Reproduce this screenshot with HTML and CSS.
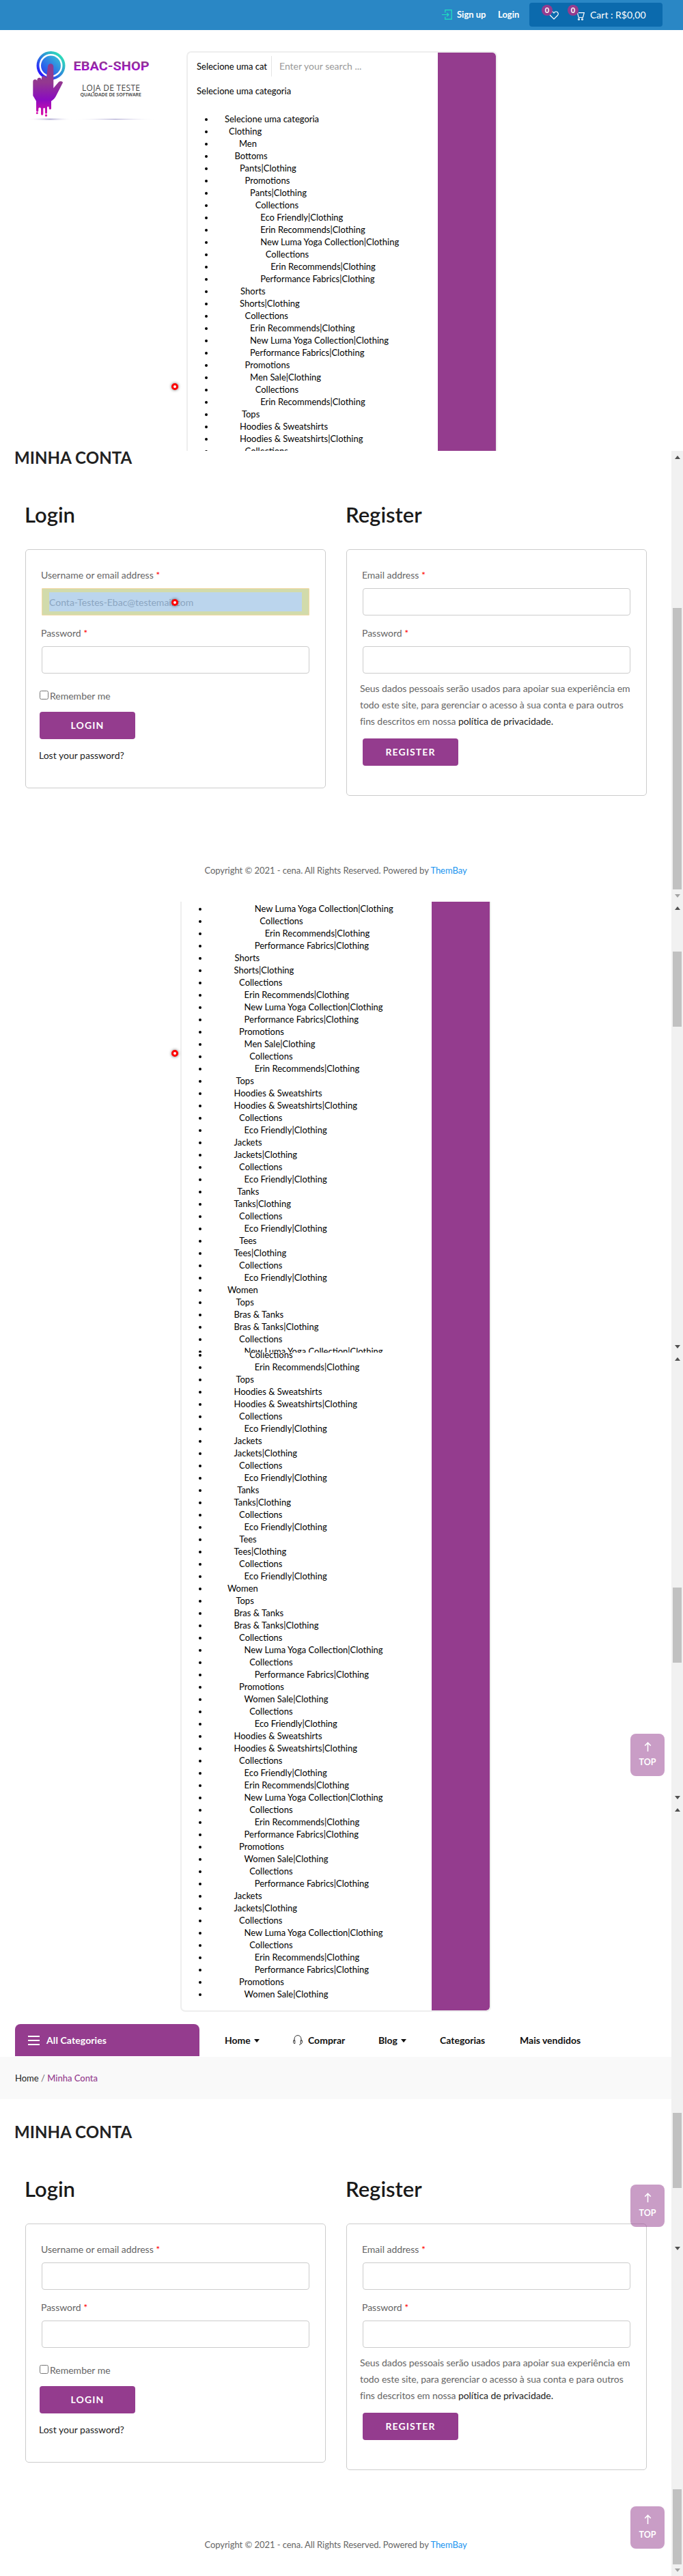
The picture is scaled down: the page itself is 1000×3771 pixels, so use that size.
FILE: index.html
```html
<!DOCTYPE html>
<html lang="pt-BR">
<head>
<meta charset="utf-8">
<title>EBAC-SHOP - Minha Conta</title>
<link rel="stylesheet" href="styles.css">
</head>
<body>
<section class="view view-top">
  <header class="topbar">
    <svg class="signin-icon" width="15" height="15" viewBox="0 0 15 15" fill="none" stroke="#1ee3bf" stroke-width="1.2"><path d="M4.8 4.5V.7h9.4v13.4H4.8v-3.5M0 7.5h9.8M7.2 4.8l2.7 2.7-2.7 2.7"/></svg>
    <a class="signup">Sign up</a>
    <a class="signin">Login</a>
    <div class="cartbox">
      <span class="wish"><svg width="14" height="13" viewBox="0 0 14 13" fill="none" stroke="#fff" stroke-width="1.2"><path d="M7 11.9 1.6 6.5C-.4 4.2 1.2 1 3.8 1 5.3 1 6.4 1.9 7 3 7.6 1.9 8.700 1 10.200 1c2.600 0 4.200 3.200 2.200 5.500z"/></svg><b class="count">0</b></span>
      <span class="cart"><svg width="13" height="13" viewBox="0 0 13 13" fill="none" stroke="#fff" stroke-width="1.200"><path d="M0 1.200h2.200l2 7.300h6.300L12.300 1.600H4"/><circle cx="4.500" cy="11.200" r="1"/><circle cx="9.500" cy="11.200" r="1"/></svg><b class="count">0</b></span>
      <span class="total">Cart : R$0,00</span>
    </div>
  </header>
  <div class="masthead">
    <svg class="logo" width="190" height="104" viewBox="40 74 190 104">
      <defs>
        <linearGradient id="ring" x1="0" y1="1" x2="1" y2="0"><stop offset="0.1" stop-color="#2a10ff"/><stop offset="0.5" stop-color="#2d86dc"/><stop offset="0.9" stop-color="#2fe0b8"/></linearGradient>
        <linearGradient id="disc" x1="0" y1="1" x2="1" y2="0"><stop offset="0" stop-color="#2638f5"/><stop offset="1" stop-color="#37c6d4"/></linearGradient>
        <linearGradient id="hand" gradientUnits="userSpaceOnUse" x1="0" y1="94" x2="0" y2="170"><stop offset="0" stop-color="#8c3c92"/><stop offset="0.35" stop-color="#93388f"/><stop offset="0.68" stop-color="#8a0cc0"/><stop offset="1" stop-color="#e010a8"/></linearGradient>
        <linearGradient id="brand" gradientUnits="userSpaceOnUse" x1="0" y1="90" x2="0" y2="104"><stop offset="0" stop-color="#8f3a8c"/><stop offset="1" stop-color="#a008d0"/></linearGradient>
        <radialGradient id="shade"><stop offset="0" stop-color="#a9a3cf"/><stop offset="1" stop-color="#fff" stop-opacity="0"/></radialGradient>
      </defs>
      <circle cx="74.500" cy="96" r="19" fill="none" stroke="url(#ring)" stroke-width="4"/>
      <circle cx="74.500" cy="96" r="14.500" fill="url(#disc)"/>
      <path fill="url(#hand)" d="M70 97.500a4.100 4.100 0 0 1 8.300 0V129l7.200-8.500c2.500-2.700 6.500-1.600 6.500.5L82 140.500c-1.500 3.500-4 5.500-7 7.500v11a1.700 1.700 0 0 1-3.300 0v-2a1.400 1.400 0 0 0-2.700 0v8a1.500 1.500 0 0 1-3 0v-6a1.400 1.400 0 0 0-2.700 0v8a1.600 1.600 0 0 1-3.300 0v-8a1.900 1.900 0 0 0-3.700 0v3a1.600 1.600 0 0 1-3.300 0V148l-4.700-8V119.500c0-4 5.300-4 6-1v-1.500c.5-4.500 6-4.500 6.500 0v-2.500c.5-4.500 6-4 7 0z"/>
      <circle cx="54.300" cy="165.500" r="1.500" fill="#d512ae"/>
      <circle cx="67.500" cy="169" r="1.700" fill="#dd12aa"/>
      <text x="107.500" y="103" class="logo-name" textLength="111" lengthAdjust="spacingAndGlyphs" fill="url(#brand)">EBAC-SHOP</text>
      <text x="120" y="133.300" class="logo-sub" textLength="85">LOJA DE TESTE</text>
      <text x="117.500" y="141" class="logo-tag" textLength="89.500">QUALIDADE DE SOFTWARE</text>
      <ellipse cx="73" cy="174.500" rx="33" ry="2.500" fill="url(#shade)"/>
      <ellipse cx="169" cy="174.500" rx="60" ry="1.500" fill="url(#shade)"/>
    </svg>
    <div class="search">
      <div class="search-main">
        <div class="search-row"><span class="select">Selecione uma cat</span><span class="query">Enter your search ...</span></div>
        <p class="current">Selecione uma categoria</p>
        <ul class="cats">
          <li class="root">Selecione uma categoria</li>
          <li class="l1">Clothing</li>
          <li class="men">Men</li>
          <li class="bottoms">Bottoms</li>
          <li class="l3">Pants|Clothing</li>
          <li class="l4">Promotions</li>
          <li class="l5">Pants|Clothing</li>
          <li class="l6">Collections</li>
          <li class="l7">Eco Friendly|Clothing</li>
          <li class="l7">Erin Recommends|Clothing</li>
          <li class="l7">New Luma Yoga Collection|Clothing</li>
          <li class="l8">Collections</li>
          <li class="l9">Erin Recommends|Clothing</li>
          <li class="l7">Performance Fabrics|Clothing</li>
          <li class="shorts">Shorts</li>
          <li class="l3">Shorts|Clothing</li>
          <li class="l4">Collections</li>
          <li class="l5">Erin Recommends|Clothing</li>
          <li class="l5">New Luma Yoga Collection|Clothing</li>
          <li class="l5">Performance Fabrics|Clothing</li>
          <li class="l4">Promotions</li>
          <li class="l5">Men Sale|Clothing</li>
          <li class="l6">Collections</li>
          <li class="l7">Erin Recommends|Clothing</li>
          <li class="tops">Tops</li>
          <li class="l3">Hoodies &amp; Sweatshirts</li>
          <li class="l3">Hoodies &amp; Sweatshirts|Clothing</li>
          <li class="l4">Collections</li>
        </ul>
      </div>
      <div class="search-btn"></div>
    </div>
  </div>
  <i class="pointer pointer-list"></i>
</section>

<section class="view view-account">
  <div class="page">
    <h1>MINHA CONTA</h1>
    <div class="account">
      <div class="col">
        <h2>Login</h2>
        <form class="panel panel-login">
          <label>Username or email address <em>*</em></label>
          <div class="input inspected"><span>Conta-Testes-Ebac@testemail.com</span></div>
          <label>Password <em>*</em></label>
          <div class="input"></div>
          <div class="remember"><i class="check"></i>Remember me</div>
          <div class="btn">LOGIN</div>
          <a class="lost">Lost your password?</a>
        </form>
      </div>
      <div class="col">
        <h2>Register</h2>
        <form class="panel panel-register">
          <label>Email address <em>*</em></label>
          <div class="input"></div>
          <label>Password <em>*</em></label>
          <div class="input"></div>
          <p class="privacy">Seus dados pessoais serão usados para apoiar sua experiência em<br>todo este site, para gerenciar o acesso à sua conta e para outros<br>fins descritos em nossa <a>política de privacidade.</a></p>
          <div class="btn">REGISTER</div>
        </form>
      </div>
    </div>
    <footer>Copyright © 2021 - cena. All Rights Reserved. Powered by <a>ThemBay</a></footer>
  </div>
  <div class="bar"><div class="track"><i class="up"></i><i class="thumb" style="height:412px;margin-top:218px"></i><i class="down off"></i></div></div>
  <i class="pointer pointer-input"></i>
</section>

<section class="view view-list">
  <div class="page">
    <div class="search narrow">
      <div class="search-main">
        <ul class="cats">
          <li class="l7">New Luma Yoga Collection|Clothing</li>
          <li class="l8">Collections</li>
          <li class="l9">Erin Recommends|Clothing</li>
          <li class="l7">Performance Fabrics|Clothing</li>
          <li class="shorts">Shorts</li>
          <li class="l3">Shorts|Clothing</li>
          <li class="l4">Collections</li>
          <li class="l5">Erin Recommends|Clothing</li>
          <li class="l5">New Luma Yoga Collection|Clothing</li>
          <li class="l5">Performance Fabrics|Clothing</li>
          <li class="l4">Promotions</li>
          <li class="l5">Men Sale|Clothing</li>
          <li class="l6">Collections</li>
          <li class="l7">Erin Recommends|Clothing</li>
          <li class="tops">Tops</li>
          <li class="l3">Hoodies &amp; Sweatshirts</li>
          <li class="l3">Hoodies &amp; Sweatshirts|Clothing</li>
          <li class="l4">Collections</li>
          <li class="l5">Eco Friendly|Clothing</li>
          <li class="l3">Jackets</li>
          <li class="l3">Jackets|Clothing</li>
          <li class="l4">Collections</li>
          <li class="l5">Eco Friendly|Clothing</li>
          <li class="tanks">Tanks</li>
          <li class="l3">Tanks|Clothing</li>
          <li class="l4">Collections</li>
          <li class="l5">Eco Friendly|Clothing</li>
          <li class="tees">Tees</li>
          <li class="l3">Tees|Clothing</li>
          <li class="l4">Collections</li>
          <li class="l5">Eco Friendly|Clothing</li>
          <li class="women">Women</li>
          <li class="tops">Tops</li>
          <li class="l3">Bras &amp; Tanks</li>
          <li class="l3">Bras &amp; Tanks|Clothing</li>
          <li class="l4">Collections</li>
          <li class="l5">New Luma Yoga Collection|Clothing</li>
        </ul>
      </div>
      <div class="search-btn"></div>
    </div>
  </div>
  <div class="bar"><div class="track"><i class="up"></i><i class="thumb" style="height:110px;margin-top:61px"></i><i class="down"></i></div></div>
  <i class="pointer pointer-list"></i>
</section>

<section class="view view-rest">
  <div class="page">
    <div class="search narrow last">
      <div class="search-main">
        <ul class="cats">
          <li class="l6">Collections</li>
          <li class="l7">Erin Recommends|Clothing</li>
          <li class="tops">Tops</li>
          <li class="l3">Hoodies &amp; Sweatshirts</li>
          <li class="l3">Hoodies &amp; Sweatshirts|Clothing</li>
          <li class="l4">Collections</li>
          <li class="l5">Eco Friendly|Clothing</li>
          <li class="l3">Jackets</li>
          <li class="l3">Jackets|Clothing</li>
          <li class="l4">Collections</li>
          <li class="l5">Eco Friendly|Clothing</li>
          <li class="tanks">Tanks</li>
          <li class="l3">Tanks|Clothing</li>
          <li class="l4">Collections</li>
          <li class="l5">Eco Friendly|Clothing</li>
          <li class="tees">Tees</li>
          <li class="l3">Tees|Clothing</li>
          <li class="l4">Collections</li>
          <li class="l5">Eco Friendly|Clothing</li>
          <li class="women">Women</li>
          <li class="tops">Tops</li>
          <li class="l3">Bras &amp; Tanks</li>
          <li class="l3">Bras &amp; Tanks|Clothing</li>
          <li class="l4">Collections</li>
          <li class="l5">New Luma Yoga Collection|Clothing</li>
          <li class="l6">Collections</li>
          <li class="l7">Performance Fabrics|Clothing</li>
          <li class="l4">Promotions</li>
          <li class="l5">Women Sale|Clothing</li>
          <li class="l6">Collections</li>
          <li class="l7">Eco Friendly|Clothing</li>
          <li class="l3">Hoodies &amp; Sweatshirts</li>
          <li class="l3">Hoodies &amp; Sweatshirts|Clothing</li>
          <li class="l4">Collections</li>
          <li class="l5">Eco Friendly|Clothing</li>
          <li class="l5">Erin Recommends|Clothing</li>
          <li class="l5">New Luma Yoga Collection|Clothing</li>
          <li class="l6">Collections</li>
          <li class="l7">Erin Recommends|Clothing</li>
          <li class="l5">Performance Fabrics|Clothing</li>
          <li class="l4">Promotions</li>
          <li class="l5">Women Sale|Clothing</li>
          <li class="l6">Collections</li>
          <li class="l7">Performance Fabrics|Clothing</li>
          <li class="l3">Jackets</li>
          <li class="l3">Jackets|Clothing</li>
          <li class="l4">Collections</li>
          <li class="l5">New Luma Yoga Collection|Clothing</li>
          <li class="l6">Collections</li>
          <li class="l7">Erin Recommends|Clothing</li>
          <li class="l7">Performance Fabrics|Clothing</li>
          <li class="l4">Promotions</li>
          <li class="l5">Women Sale|Clothing</li>
        </ul>
      </div>
      <div class="search-btn"></div>
    </div>
    <nav class="menu">
      <div class="all"><span class="burger"></span>All Categories</div>
      <a class="m-home">Home<i class="caret"></i></a>
      <a class="m-shop"><svg width="14" height="15" viewBox="0 0 14 15" fill="none" stroke="#333" stroke-width="1"><path d="M2 9V6c0-7.200 10-7.200 10 0v3M.8 7.800h2v4.700h-.8c-1 0-1.500-1-1.500-2.200zM13.200 7.800h-2v4.700h.8c1 0 1.500-1 1.500-2.200zM11.800 12.500c0 1.200-1 1.700-2.800 1.700"/></svg>Comprar</a>
      <a class="m-blog">Blog<i class="caret"></i></a>
      <a class="m-cats">Categorias</a>
      <a class="m-best">Mais vendidos</a>
    </nav>
    <div class="crumbs"><a>Home</a> / <b>Minha Conta</b></div>
    <h1>MINHA CONTA</h1>
    <div class="account">
      <div class="col">
        <h2>Login</h2>
        <form class="panel panel-login">
          <label>Username or email address <em>*</em></label>
          <div class="input"></div>
          <label>Password <em>*</em></label>
          <div class="input"></div>
          <div class="remember"><i class="check"></i>Remember me</div>
          <div class="btn">LOGIN</div>
          <a class="lost">Lost your password?</a>
        </form>
      </div>
      <div class="col">
        <h2>Register</h2>
        <form class="panel panel-register">
          <label>Email address <em>*</em></label>
          <div class="input"></div>
          <label>Password <em>*</em></label>
          <div class="input"></div>
          <p class="privacy">Seus dados pessoais serão usados para apoiar sua experiência em<br>todo este site, para gerenciar o acesso à sua conta e para outros<br>fins descritos em nossa <a>política de privacidade.</a></p>
          <div class="btn">REGISTER</div>
        </form>
      </div>
    </div>
    <footer>Copyright © 2021 - cena. All Rights Reserved. Powered by <a>ThemBay</a></footer>
  </div>
  <div class="bar">
    <div class="track"><i class="up"></i><i class="thumb" style="height:110px;margin-top:332px"></i><i class="down"></i></div>
    <div class="track"><i class="up"></i><i class="thumb" style="height:110px;margin-top:441px"></i><i class="down"></i></div>
    <div class="track tail"><i class="thumb" style="height:110px;margin-top:344px"></i><i class="down off"></i></div>
  </div>
  <a class="totop t1"><svg width="11" height="14" viewBox="0 0 11 14" fill="none" stroke="#fff" stroke-width="1.600"><path d="M5.500 14V1.500M1.200 5.500l4.300-4.300 4.300 4.300"/></svg>TOP</a>
  <a class="totop t2"><svg width="11" height="14" viewBox="0 0 11 14" fill="none" stroke="#fff" stroke-width="1.600"><path d="M5.500 14V1.500M1.200 5.500l4.300-4.300 4.300 4.300"/></svg>TOP</a>
  <a class="totop t3"><svg width="11" height="14" viewBox="0 0 11 14" fill="none" stroke="#fff" stroke-width="1.600"><path d="M5.500 14V1.500M1.200 5.500l4.300-4.300 4.300 4.300"/></svg>TOP</a>
</section>
</body>
</html>
```
FILE: styles.css
```css
* { box-sizing: border-box; }
body { margin: 0; width: 1000px; background: #fff; color: #666; font: 14px/20px Lato, "Liberation Sans", sans-serif; }
h1, h2, p, ul { margin: 0; padding: 0; }
svg { display: block; flex: none; }

.view { position: relative; display: flex; height: 660px; overflow: hidden; }
.view-top { flex-direction: column; }
.view-rest { height: 1791px; }
.page { width: 983px; flex: none; }

/* top bar */
.topbar { display: flex; height: 44px; flex: none; padding: 4px 30px 5px 647px; background: #2a87c5; color: #fff; font-weight: 700; font-size: 13px; line-height: 35px; white-space: nowrap; }
.signin-icon { margin-top: 10px; }
.signup { margin-left: 7px; width: 60px; }
.signin { width: 46px; }
.cartbox { display: flex; width: 195px; height: 35px; border-radius: 4px; background: #0b6aad; font-weight: 400; font-size: 14px; }
.wish, .cart { position: relative; height: 35px; }
.wish { margin-left: 29px; width: 39px; padding-top: 12px; }
.cart { width: 21px; padding-top: 13px; }
.count { position: absolute; top: 3px; width: 16px; height: 16px; border-radius: 50%; background: #943c8e; font-size: 11px; line-height: 16px; text-align: center; }
.wish .count { left: -11px; }
.cart .count { left: -12px; }
.total { line-height: 36px; }

/* logo and category search */
.masthead { display: flex; align-items: flex-start; padding: 31px 0 0 40px; }
.logo { width: 190px; margin: -1px 43px 0 0; }
.logo-name { font: 700 18px Roboto, "Liberation Sans", sans-serif; }
.logo-sub { font: 12px "Open Sans", sans-serif; fill: #444; }
.logo-tag { font: 600 7px "Open Sans", sans-serif; fill: #333; }
.search { display: flex; width: 455px; min-height: 700px; flex: none; border: 2px solid #eee; border-radius: 7px; overflow: hidden; color: #000; font-size: 13px; line-height: 18px; }
.search-main { flex: 1; padding: 5px 0 0 13px; white-space: nowrap; }
.search-btn { width: 85px; background: #943c8e; border-radius: 0 5px 5px 0; }
.search-row { display: flex; height: 30px; line-height: 30px; }
.select { width: 110px; border-right: 1px solid #e5e5e5; }
.query { margin-left: 11px; font-size: 14px; color: #999; }
.current { margin: 12px 0 23px; }
.cats { list-style: none; margin-left: 12px; }
.cats li { display: flex; gap: .8px; height: 18px; }
.cats li::before { content: ""; width: 4px; height: 4px; margin-top: 8px; border-radius: 50%; background: #000; }
.cats .root::before { margin-right: 24.2px; }
.cats .l1::before { margin-right: 30.3px; }
.cats .women::before { margin-right: 36.6px; }
.cats .bottoms::before { margin-right: 38.7px; }
.cats .men::before { margin-right: 45.2px; }
.cats .l3::before { margin-right: 46.2px; }
.cats .shorts::before { margin-right: 47.3px; }
.cats .tops::before { margin-right: 49.1px; }
.cats .tanks::before { margin-right: 50.9px; }
.cats .l4::before { margin-right: 53.8px; }
.cats .tees::before { margin-right: 54px; }
.cats .l5::before { margin-right: 61.3px; }
.cats .l6::before { margin-right: 68.9px; }
.cats .l7::before { margin-right: 76.4px; }
.cats .l8::before { margin-right: 84px; }
.cats .l9::before { margin-right: 91.5px; }
.narrow { margin-left: 264px; border-top: 0; border-radius: 0; }
.narrow .search-main { padding-top: 1px; }
.narrow .cats li { gap: 1.3px; }
.narrow .search-btn { border-radius: 0; }
.last { margin-top: -6px; min-height: 0; border-radius: 0 0 7px 7px; }
.last .search-main { padding: 0 0 15px 13px; }
.last .search-btn { border-radius: 0 0 5px 0; }

/* main menu */
.menu { display: flex; height: 47px; margin: 18px 0 1px 22px; color: #111; font-weight: 700; line-height: 46px; white-space: nowrap; }
.menu a { display: flex; align-items: center; }
.all { display: flex; align-items: center; width: 270px; padding-left: 19px; border-radius: 8px 8px 0 0; background: #943c8e; color: #fff; line-height: 47px; letter-spacing: .1px; }
.burger { width: 17px; height: 14px; margin-right: 10px; border: solid #fff; border-width: 2px 0; background: linear-gradient(#fff, #fff) 0 4px / 17px 2px no-repeat; }
.caret { margin: 1px 0 0 5px; border: 4px solid transparent; border-top: 5px solid #111; border-bottom: 0; }
.m-home { margin-left: 37px; width: 100px; }
.m-shop { width: 125px; }
.m-shop svg { margin: -1px 8px 0 0; }
.m-blog { width: 90px; }
.m-cats { width: 117px; }
.crumbs { height: 62px; padding-left: 22px; background: #f9f9f9; font-size: 13px; line-height: 62px; }
.crumbs a { color: #222; }
.crumbs b { color: #943c8e; font-weight: 500; }

/* account */
h1 { padding-left: 21px; color: #222; font-size: 24px; font-weight: 700; line-height: 19px; letter-spacing: .1px; }
.crumbs + h1 { margin-top: 38px; }
.account { display: flex; gap: 30px; align-items: flex-start; margin: 55px 0 0 37px; height: 431px; }
.col { width: 440px; }
h2 { margin-left: -1px; color: #1a1a1a; font-size: 31px; font-weight: 600; line-height: 38px; }
.panel { margin: 32px 0 0; padding: 27px 20px 0; border: 1px solid #ccc; border-radius: 5px; }
.panel-login { height: 350px; }
.panel-register { height: 361px; }
label { display: block; margin-left: 2px; height: 29px; letter-spacing: -.02px; }
em { color: #f00; font-style: normal; }
.input { height: 40px; margin: 0 3px 16px; border: 1px solid #ccc; border-radius: 4px; }
.inspected { padding: 5px 10px; border-color: #f3d9a4; border-radius: 1px; background: #d2dbab; color: #8ba5c1; }
.inspected span { display: block; height: 28px; line-height: 30px; background: #bbd5ed; }
.remember { display: flex; margin-top: 23px; }
.check { width: 13px; height: 13px; margin: 2px 2px 0 0; border: 1px solid #767676; border-radius: 2.5px; }
.btn { width: 140px; height: 40px; margin-top: 13px; border-radius: 4px; background: #943c8e; color: #fff; font-weight: 700; line-height: 40px; letter-spacing: 1.1px; text-align: center; }
.panel-register .btn { margin-left: 3px; }
.lost { display: block; margin-top: 14px; margin-left: -1px; color: #222; }
.privacy { margin: -6px 0 0 -1px; line-height: 24px; letter-spacing: -.07px; white-space: nowrap; }
.privacy a { color: #222; }
footer { margin-top: 99px; font-size: 13px; text-align: center; letter-spacing: -.05px; }
footer a { color: #1a94f0; }

/* scrollbars */
.bar { width: 17px; background: #f1f1f1; }
.track { display: flex; flex-direction: column; align-items: center; height: 660px; padding: 7px 0 6px; }
.tail { height: 471px; padding-top: 0; }
.thumb { width: 13px; flex: none; background: #c1c1c1; }
.up, .down { border: 4px solid transparent; }
.up { border-top: 0; border-bottom: 5px solid #505050; }
.down { margin-top: auto; border-bottom: 0; border-top: 5px solid #505050; }
.down.off { border-top-color: #a3a3a3; }

/* overlays */
.pointer { position: absolute; left: 251px; width: 10px; height: 10px; border: 3px solid #f00; border-radius: 50%; background: #fff; box-shadow: 0 0 4px rgba(0, 0, 0, .6); }
.pointer-list { top: 561px; }
.view-list .pointer-list { top: 217px; }
.pointer-input { top: 217px; }
.totop { position: absolute; left: 923px; display: flex; flex-direction: column; align-items: center; width: 50px; height: 62px; padding-top: 12px; border-radius: 8px; background: rgba(148, 60, 142, .5); color: #fff; font-weight: 700; font-size: 12.5px; line-height: 18px; }
.totop svg { margin-bottom: 7px; }
.t1 { top: 558px; }
.t2 { top: 1218px; }
.t3 { top: 1689px; }
```
